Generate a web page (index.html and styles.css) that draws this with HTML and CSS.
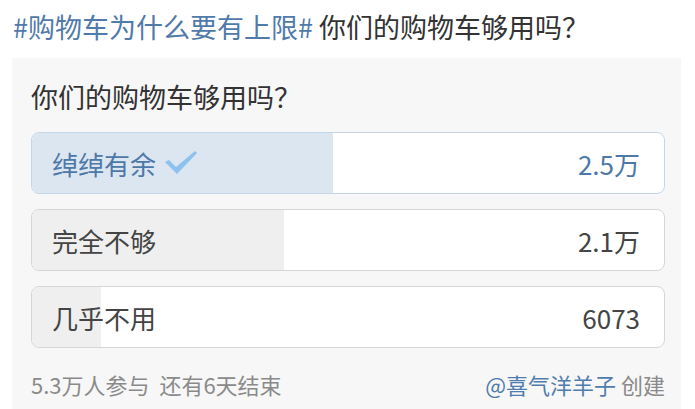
FILE: index.html
```html
<!DOCTYPE html>
<html lang="zh-CN">
<head>
    <meta charset="UTF-8">
    <meta name="viewport" content="width=device-width, initial-scale=1.0">
    <title>你们的购物车够用吗？</title>
    <link rel="stylesheet" href="styles.css">
</head>
<body>
    <div class="title">
        <span class="tag">#购物车为什么要有上限#</span> 你们的购物车够用吗？
    </div>

    <div class="poll">
        <div class="question">你们的购物车够用吗？</div>

        <div class="option selected">
            <div class="fill" style="width: 47.7%"></div>
            <div class="label">
                绰绰有余
                <svg class="check" width="34" height="26" viewBox="0 0 34 26">
                    <path d="M1 12 L5 10 L12 17 L31 1 L33 3 L13 24 Z" fill="#8dc1ef"/>
                </svg>
            </div>
            <div class="count">2.5万</div>
        </div>

        <div class="option">
            <div class="fill" style="width: 39.8%"></div>
            <div class="label">完全不够</div>
            <div class="count">2.1万</div>
        </div>

        <div class="option">
            <div class="fill" style="width: 10.9%"></div>
            <div class="label">几乎不用</div>
            <div class="count">6073</div>
        </div>

        <div class="footer">
            <span>5.3万人参与&nbsp;&nbsp;还有6天结束</span>
            <span><span class="author">@喜气洋羊子</span> 创建</span>
        </div>
    </div>
</body>
</html>
```

FILE: styles.css
```css
body {
    margin: 0;
    background: #fff;
    font-family: "Noto Sans CJK SC", "Noto Sans", sans-serif;
    color: #333;
}
.title {
    padding: 9px 0 13px 13px;
    font-size: 27px;
    line-height: 36px;
    white-space: nowrap;
}
.tag {
    color: #4f7aaa;
}
.poll {
    margin: 0 14px 0 12px;
    padding: 21px 16px 12px 19px;
    background: #f7f7f7;
}
.question {
    font-size: 27px;
    line-height: 36px;
    color: #333;
    margin-bottom: 17px;
}
.option {
    position: relative;
    display: flex;
    align-items: center;
    justify-content: space-between;
    height: 62px;
    box-sizing: border-box;
    padding: 0 24px 0 20px;
    margin-bottom: 15px;
    background: #fff;
    border: 1px solid #d6d6d6;
    border-radius: 8px;
    overflow: hidden;
    font-size: 26px;
    color: #444;
}
.option .fill {
    position: absolute;
    left: 0;
    top: 0;
    bottom: 0;
    background: #efefef;
}
.option .label,
.option .count {
    position: relative;
    display: flex;
    align-items: center;
}
.option.selected {
    border-color: #c4d5e6;
    color: #4d78a7;
}
.option.selected .fill {
    background: #dce6f1;
}
.check {
    margin-left: 8px;
}
.footer {
    display: flex;
    justify-content: space-between;
    margin-top: 18px;
    font-size: 22px;
    line-height: 36px;
    color: #8a8a8a;
}
.author {
    color: #507dae;
}
```
